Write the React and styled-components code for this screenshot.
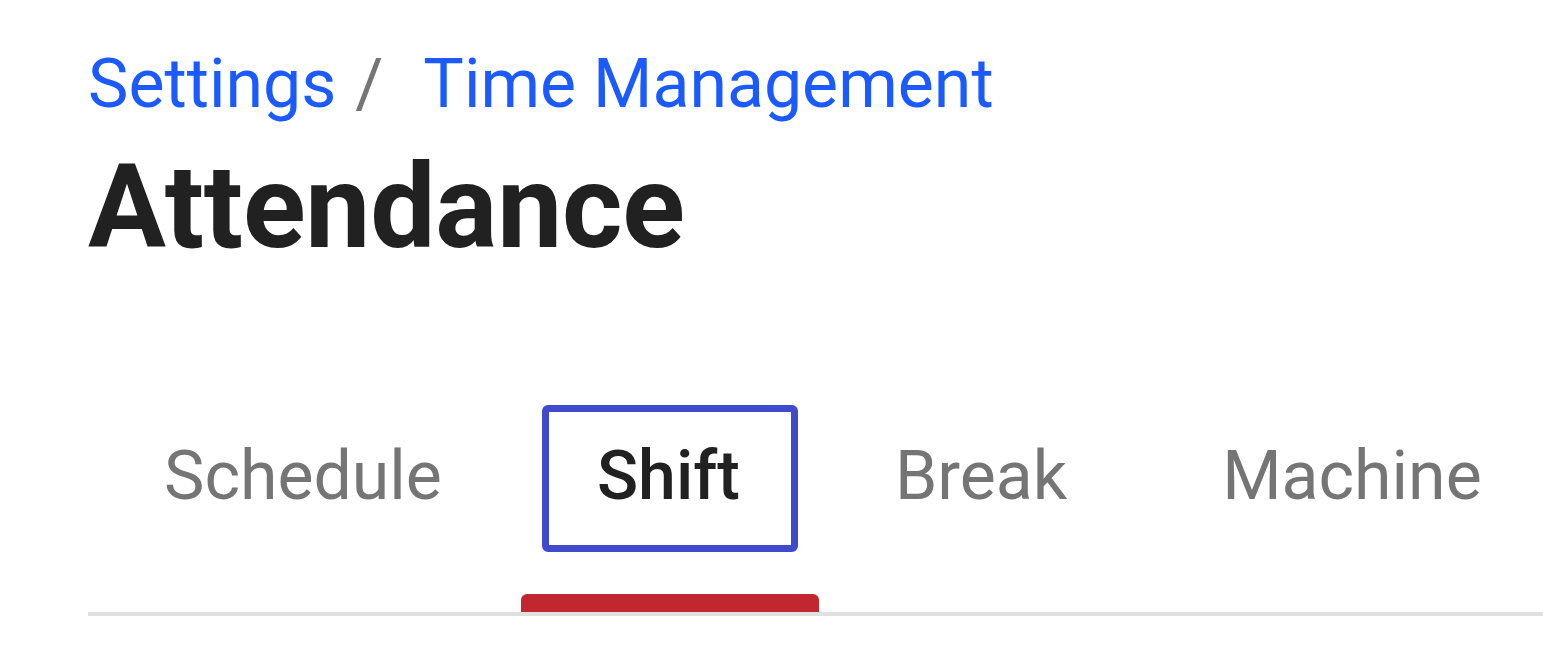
import React, { useState } from 'react'
import styled, { createGlobalStyle } from 'styled-components'

const GlobalStyle = createGlobalStyle`
body {
    margin: 0;
    background: #fff;
    font-family: Roboto, "Liberation Sans", sans-serif;
}
`

const Page = styled.div`
padding: 44px 0 0 88px;
`

const Breadcrumb = styled.nav`
display: flex;
align-items: baseline;
font-size: 68px;
`

const Crumb = styled.a`
color: #1a5aff;
text-decoration: none;
`

const Slash = styled.span`
color: #757575;
margin: 0 40px 0 19px;
`

const Title = styled.h1`
margin: 15px 0 0;
font-size: 116px;
font-weight: 700;
letter-spacing: -0.2px;
color: #212121;
`

const TabList = styled.div`
display: flex;
margin-top: 130px;
border-bottom: 4px solid #e0e0e0;
`

const Tab = styled.button`
display: flex;
flex-direction: column;
align-items: center;
gap: 42px;
padding: 0 21px;
border: none;
background: none;
cursor: pointer;
font-family: inherit;
`

const Label = styled.span`
display: block;
padding: 24px 51px 29px 48px;
border: 7px solid ${({ active }) => (active ? '#404bcb' : 'transparent')};
border-radius: 6px;
font-size: 68px;
font-weight: ${({ active }) => (active ? 500 : 400)};
color: ${({ active }) => (active ? '#212121' : '#757575')};
`

const Indicator = styled.span`
align-self: stretch;
margin: 0 -21px;
height: 18px;
border-radius: 6px 6px 0 0;
background: ${({ active }) => (active ? '#c0272f' : 'transparent')};
`

const tabs = ['Schedule', 'Shift', 'Break', 'Machine']

export default function App() {
    const [current, setCurrent] = useState('Shift')
    return (
        <Page>
            <GlobalStyle />
            <Breadcrumb>
                <Crumb href="#">Settings</Crumb>
                <Slash>/</Slash>
                <Crumb href="#">Time Management</Crumb>
            </Breadcrumb>
            <Title>Attendance</Title>
            <TabList>
                {tabs.map(t => (
                    <Tab key={t} onClick={() => setCurrent(t)}>
                        <Label active={t === current}>{t}</Label>
                        <Indicator active={t === current} />
                    </Tab>
                ))}
            </TabList>
        </Page>
    )
}
